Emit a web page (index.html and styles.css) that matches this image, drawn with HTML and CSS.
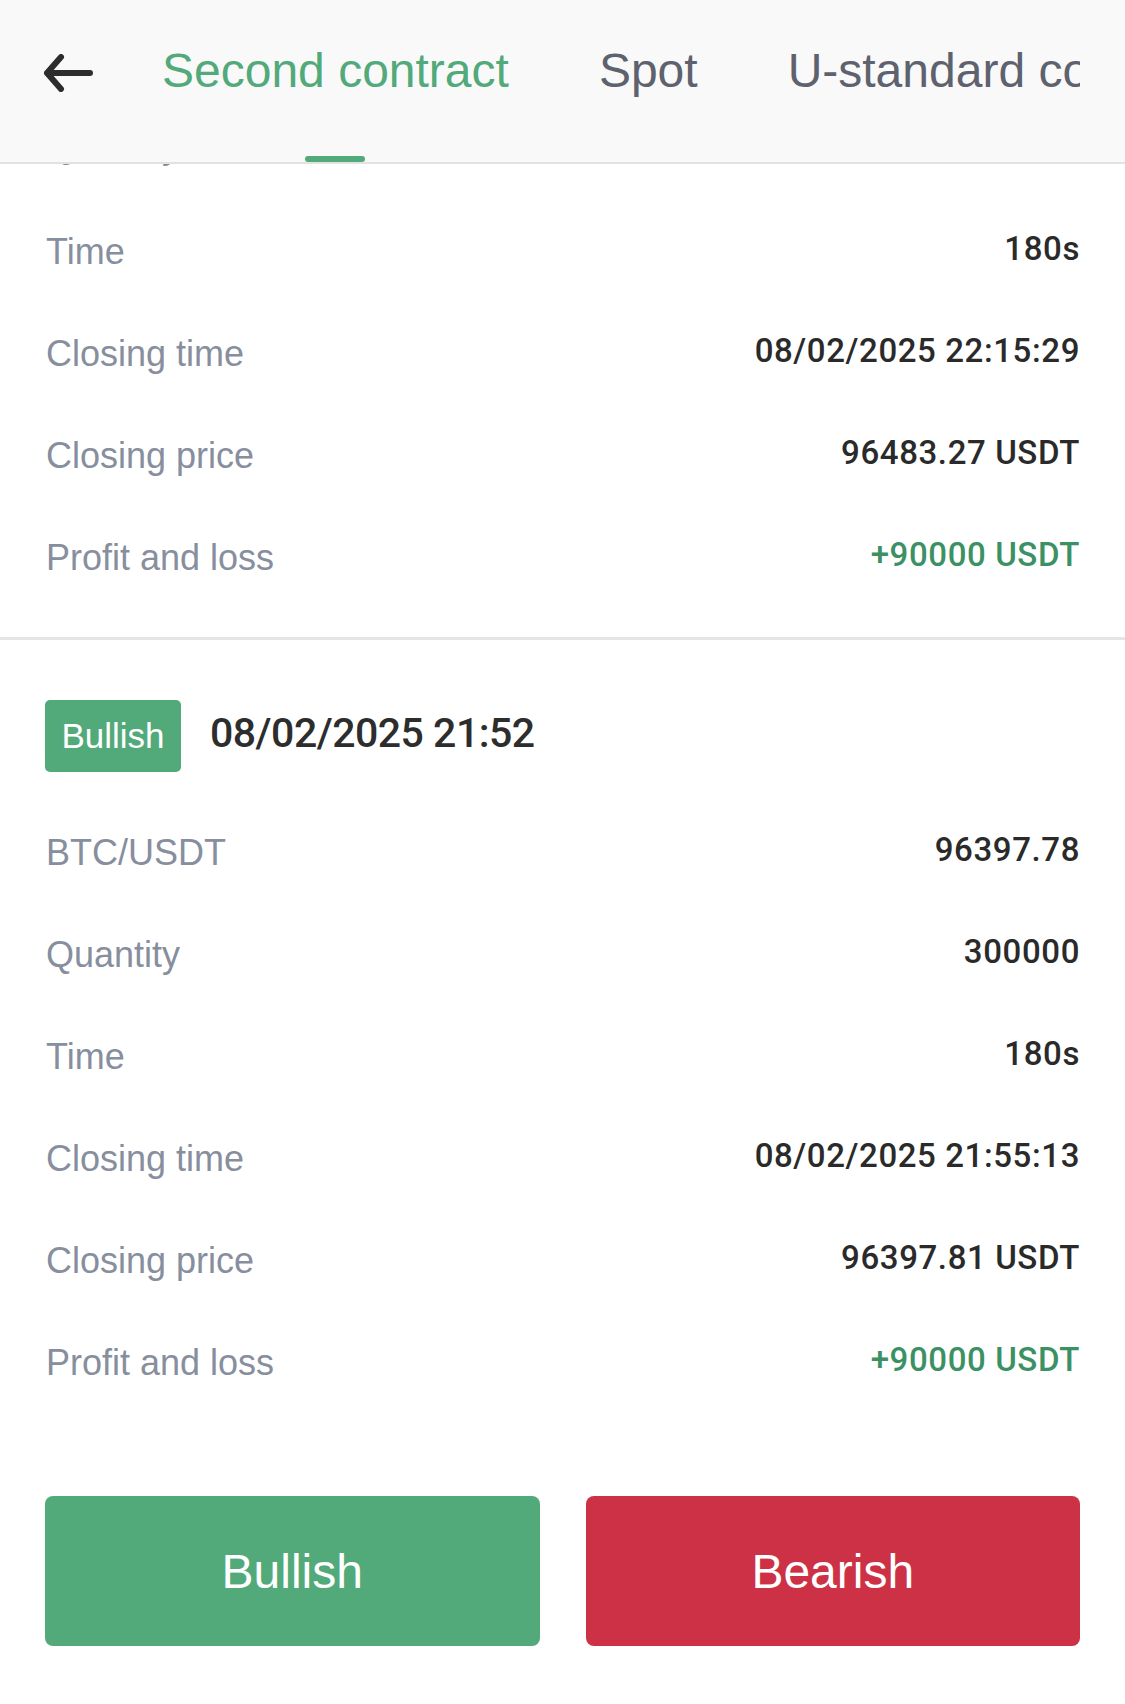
FILE: index.html
```html
<!DOCTYPE html>
<html lang="en">
<head>
<meta charset="utf-8">
<title>Second contract</title>
<link rel="stylesheet" href="styles.css">
</head>
<body>
<div class="app">
  <header class="topbar">
    <div class="back">
      <svg width="50" height="38" viewBox="0 0 50 38" aria-hidden="true">
        <path d="M17 3 L3 19 L17 35 M3 19 H46" fill="none" stroke="#2d2d2d" stroke-width="6" stroke-linecap="round" stroke-linejoin="round"/>
      </svg>
    </div>
    <nav class="tabs">
      <div class="tab active"><span class="tab-text">Second contract</span><span class="indicator"></span></div>
      <div class="tab"><span class="tab-text">Spot</span></div>
      <div class="tab"><span class="tab-text">U-standard contract</span></div>
    </nav>
  </header>

  <main class="viewport">
    <div class="list">
      <section class="record first">
        <div class="row peek"><span class="label">Quantity</span><span class="value">300000</span></div>
        <div class="row"><span class="label">Time</span><span class="value">180s</span></div>
        <div class="row"><span class="label">Closing time</span><span class="value">08/02/2025 22:15:29</span></div>
        <div class="row"><span class="label">Closing price</span><span class="value">96483.27 USDT</span></div>
        <div class="row"><span class="label">Profit and loss</span><span class="value profit">+90000 USDT</span></div>
      </section>
      <section class="record">
        <div class="record-head">
          <span class="badge">Bullish</span>
          <span class="date">08/02/2025 21:52</span>
        </div>
        <div class="row"><span class="label">BTC/USDT</span><span class="value">96397.78</span></div>
        <div class="row"><span class="label">Quantity</span><span class="value">300000</span></div>
        <div class="row"><span class="label">Time</span><span class="value">180s</span></div>
        <div class="row"><span class="label">Closing time</span><span class="value">08/02/2025 21:55:13</span></div>
        <div class="row"><span class="label">Closing price</span><span class="value">96397.81 USDT</span></div>
        <div class="row"><span class="label">Profit and loss</span><span class="value profit">+90000 USDT</span></div>
      </section>
    </div>
  </main>

  <footer class="actions">
    <button class="btn btn-bull">Bullish</button>
    <button class="btn btn-bear">Bearish</button>
  </footer>
</div>
</body>
</html>
```

FILE: styles.css
```css
* {
  box-sizing: border-box;
}

html, body {
  margin: 0;
  padding: 0;
  background: #ffffff;
}

body {
  font-family: "Liberation Sans", Arial, sans-serif;
}

.app {
  width: 1125px;
  height: 1704px;
  display: flex;
  flex-direction: column;
  overflow: hidden;
}

/* ---------- top bar ---------- */
.topbar {
  flex: 0 0 164px;
  height: 164px;
  display: flex;
  align-items: stretch;
  background: #f9f9f9;
  border-bottom: 2px solid #e2e2e2;
}

.back {
  flex: 0 0 138px;
  padding: 54px 0 0 44px;
}

.back svg {
  display: block;
}

.tabs {
  width: 942px;
  display: flex;
  gap: 90px;
  padding-left: 24px;
  overflow: hidden;
}

.tab {
  flex: 0 0 auto;
  display: flex;
  flex-direction: column;
  align-items: center;
  padding-top: 43px;
  white-space: nowrap;
}

.tab-text {
  font-size: 48px;
  line-height: 56px;
  color: #5e626e;
}

.tab.active .tab-text {
  color: #52a97a;
}

.indicator {
  margin-top: auto;
  width: 60px;
  height: 6px;
  border-radius: 3px;
  background: #52a97a;
}

/* ---------- list ---------- */
.viewport {
  flex: 1 1 auto;
  overflow: hidden;
}

.list {
  margin-top: -66px;
}

.record {
  padding: 0 45px 0 46px;
}

.record.first {
  padding-bottom: 29px;
  border-bottom: 3px solid #e5e5e5;
}

.record-head {
  display: flex;
  align-items: center;
  gap: 29px;
  padding-top: 60px;
  padding-bottom: 29px;
  margin-left: -1px;
}

.badge {
  width: 136px;
  height: 72px;
  display: flex;
  align-items: center;
  justify-content: center;
  border-radius: 5px;
  background: #52aa7a;
  color: #ffffff;
  font-size: 35px;
}

.date {
  font-family: Roboto, "Liberation Sans", sans-serif;
  font-weight: 500;
  font-size: 41px;
  letter-spacing: -0.5px;
  color: #2d2d2d;
  margin-bottom: 6px;
}

.row {
  height: 102px;
  display: flex;
  align-items: center;
  justify-content: space-between;
}

.label {
  font-size: 36px;
  color: #878e9e;
  margin-top: 2px;
}

.row.peek .label {
  margin-top: 0;
  margin-bottom: 6px;
}

.value {
  font-family: Roboto, "Liberation Sans", sans-serif;
  font-weight: 500;
  font-size: 33px;
  letter-spacing: 0.6px;
  color: #2a2a2a;
  margin-bottom: 6px;
}

.value.profit {
  color: #3b9064;
}

/* ---------- bottom actions ---------- */
.actions {
  flex: 0 0 208px;
  display: flex;
  gap: 46px;
  padding: 0 45px 58px 45px;
}

.btn {
  flex: 1 1 0;
  height: 150px;
  border: none;
  border-radius: 8px;
  color: #ffffff;
  font-family: "Liberation Sans", Arial, sans-serif;
  font-size: 48px;
  padding: 0;
}

.btn-bull {
  background: #52aa7a;
}

.btn-bear {
  background: #cd3145;
}
```
